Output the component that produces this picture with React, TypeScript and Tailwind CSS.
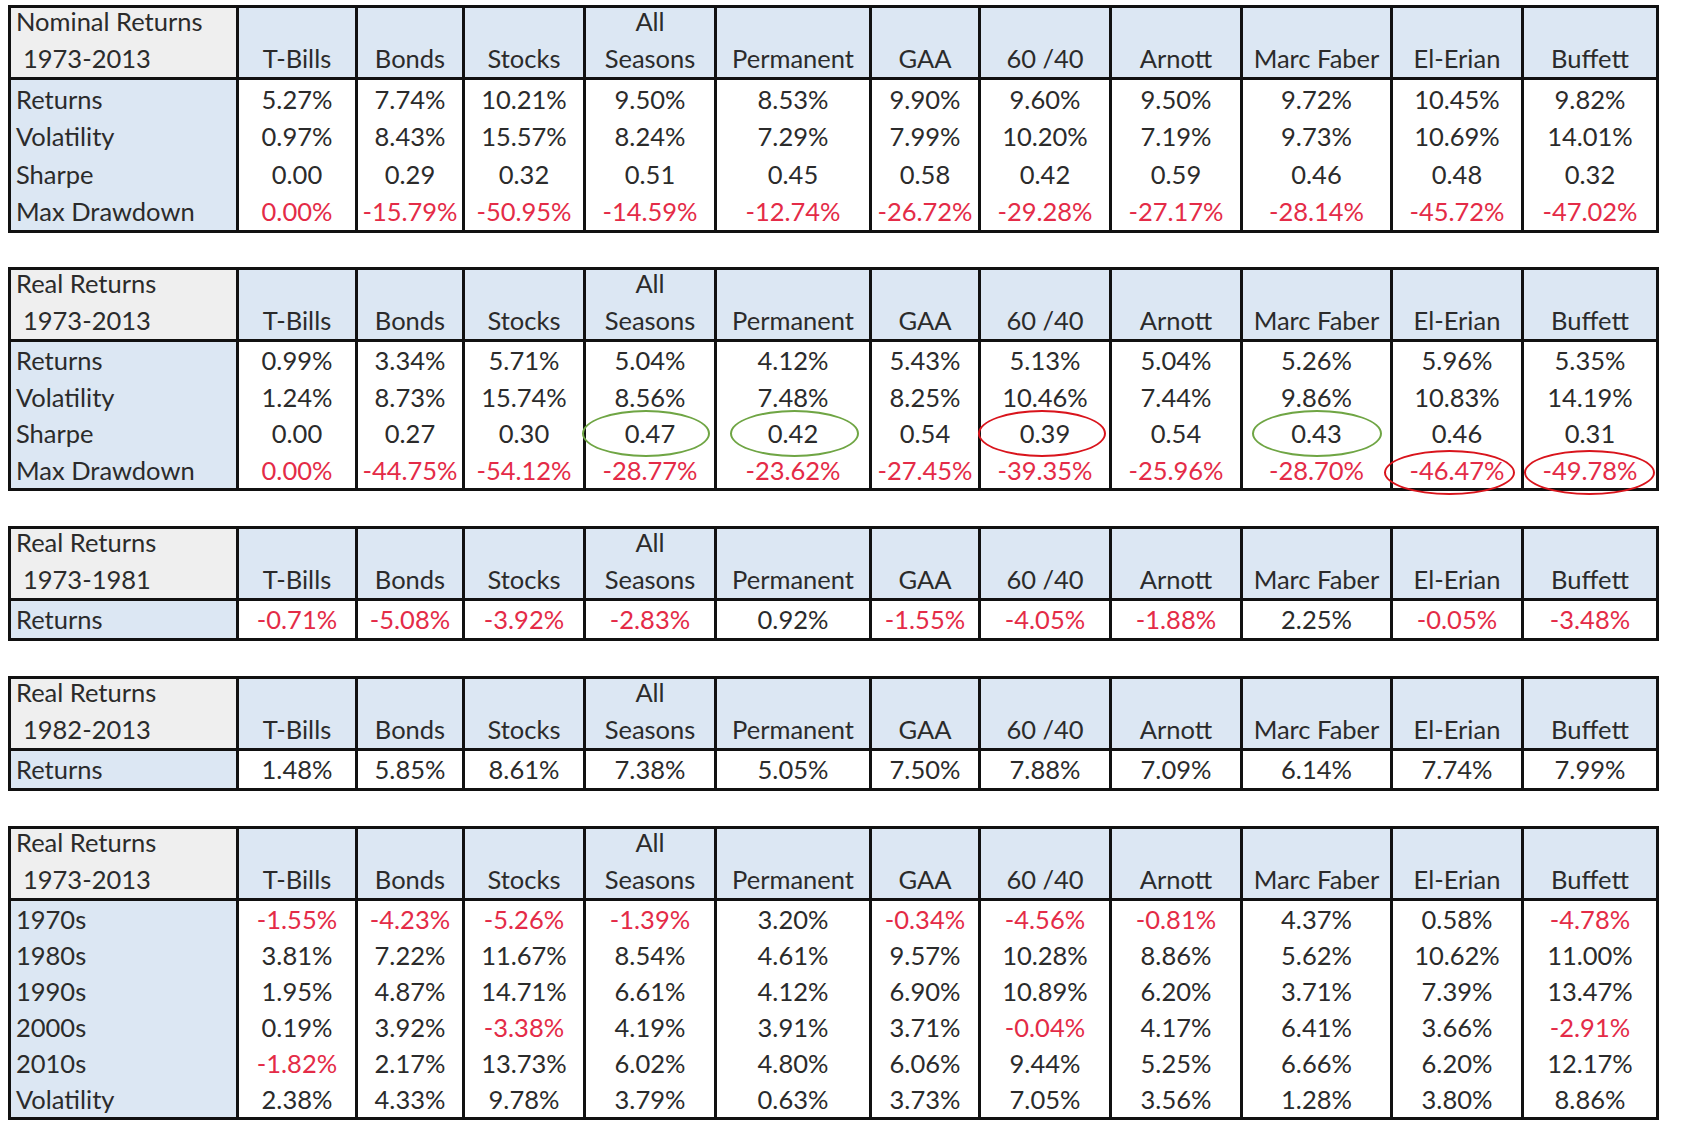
type Mark = { col: number; row: number; color: 'green' | 'red'; left: number; top: number; w: number; h: number }

type Block = {
  title: string
  years: string
  rowH: string
  gap: string
  rows: { label: string; values: string[]; allRed?: boolean }[]
  marks?: Mark[]
}

const headers = ['T-Bills', 'Bonds', 'Stocks', 'All|Seasons', 'Permanent', 'GAA', '60 /40', 'Arnott', 'Marc Faber', 'El-Erian', 'Buffett']

const blocks: Block[] = [
  {
    title: 'Nominal Returns',
    years: '1973-2013',
    rowH: 'h-[37.5px]',
    gap: 'mt-0',
    rows: [
      { label: 'Returns', values: ['5.27%', '7.74%', '10.21%', '9.50%', '8.53%', '9.90%', '9.60%', '9.50%', '9.72%', '10.45%', '9.82%'] },
      { label: 'Volatility', values: ['0.97%', '8.43%', '15.57%', '8.24%', '7.29%', '7.99%', '10.20%', '7.19%', '9.73%', '10.69%', '14.01%'] },
      { label: 'Sharpe', values: ['0.00', '0.29', '0.32', '0.51', '0.45', '0.58', '0.42', '0.59', '0.46', '0.48', '0.32'] },
      { label: 'Max Drawdown', allRed: true, values: ['0.00%', '-15.79%', '-50.95%', '-14.59%', '-12.74%', '-26.72%', '-29.28%', '-27.17%', '-28.14%', '-45.72%', '-47.02%'] },
    ],
  },
  {
    title: 'Real Returns',
    years: '1973-2013',
    rowH: 'h-[36.5px]',
    gap: 'mt-[34px]',
    rows: [
      { label: 'Returns', values: ['0.99%', '3.34%', '5.71%', '5.04%', '4.12%', '5.43%', '5.13%', '5.04%', '5.26%', '5.96%', '5.35%'] },
      { label: 'Volatility', values: ['1.24%', '8.73%', '15.74%', '8.56%', '7.48%', '8.25%', '10.46%', '7.44%', '9.86%', '10.83%', '14.19%'] },
      { label: 'Sharpe', values: ['0.00', '0.27', '0.30', '0.47', '0.42', '0.54', '0.39', '0.54', '0.43', '0.46', '0.31'] },
      { label: 'Max Drawdown', allRed: true, values: ['0.00%', '-44.75%', '-54.12%', '-28.77%', '-23.62%', '-27.45%', '-39.35%', '-25.96%', '-28.70%', '-46.47%', '-49.78%'] },
    ],
    marks: [
      { col: 3, row: 2, color: 'green', left: -4, top: -5, w: 128, h: 47 },
      { col: 4, row: 2, color: 'green', left: 13, top: -5, w: 129, h: 47 },
      { col: 6, row: 2, color: 'red', left: -3, top: -5, w: 128, h: 47 },
      { col: 8, row: 2, color: 'green', left: 9, top: -5, w: 130, h: 47 },
      { col: 9, row: 3, color: 'red', left: -9, top: -2, w: 131, h: 45 },
      { col: 10, row: 3, color: 'red', left: 0, top: -2, w: 131, h: 45 },
    ],
  },
  {
    title: 'Real Returns',
    years: '1973-1981',
    rowH: 'h-[37px]',
    gap: 'mt-[35px]',
    rows: [
      { label: 'Returns', values: ['-0.71%', '-5.08%', '-3.92%', '-2.83%', '0.92%', '-1.55%', '-4.05%', '-1.88%', '2.25%', '-0.05%', '-3.48%'] },
    ],
  },
  {
    title: 'Real Returns',
    years: '1982-2013',
    rowH: 'h-[37px]',
    gap: 'mt-[35px]',
    rows: [
      { label: 'Returns', values: ['1.48%', '5.85%', '8.61%', '7.38%', '5.05%', '7.50%', '7.88%', '7.09%', '6.14%', '7.74%', '7.99%'] },
    ],
  },
  {
    title: 'Real Returns',
    years: '1973-2013',
    rowH: 'h-[36px]',
    gap: 'mt-[35px]',
    rows: [
      { label: '1970s', values: ['-1.55%', '-4.23%', '-5.26%', '-1.39%', '3.20%', '-0.34%', '-4.56%', '-0.81%', '4.37%', '0.58%', '-4.78%'] },
      { label: '1980s', values: ['3.81%', '7.22%', '11.67%', '8.54%', '4.61%', '9.57%', '10.28%', '8.86%', '5.62%', '10.62%', '11.00%'] },
      { label: '1990s', values: ['1.95%', '4.87%', '14.71%', '6.61%', '4.12%', '6.90%', '10.89%', '6.20%', '3.71%', '7.39%', '13.47%'] },
      { label: '2000s', values: ['0.19%', '3.92%', '-3.38%', '4.19%', '3.91%', '3.71%', '-0.04%', '4.17%', '6.41%', '3.66%', '-2.91%'] },
      { label: '2010s', values: ['-1.82%', '2.17%', '13.73%', '6.02%', '4.80%', '6.06%', '9.44%', '5.25%', '6.66%', '6.20%', '12.17%'] },
      { label: 'Volatility', values: ['2.38%', '4.33%', '9.78%', '3.79%', '0.63%', '3.73%', '7.05%', '3.56%', '1.28%', '3.80%', '8.86%'] },
    ],
  },
]

function Ring({ m }: { m: Mark }) {
  return (
    <div
      className={`pointer-events-none absolute z-10 rounded-[50%] border-2 ${m.color === 'green' ? 'border-[#6fa544]' : 'border-[#d9141c]'}`}
      style={{ left: m.left, top: m.top, width: m.w, height: m.h }}
    />
  )
}

function Table({ b }: { b: Block }) {
  return (
    <div className={`w-fit border-[3px] border-[#111] ${b.gap}`}>
      <div className="grid grid-cols-[228px_119px_107px_121px_131px_155px_109px_131px_131px_150px_131px_132px]">
        <div className="flex h-[72px] flex-col justify-end border-r-[3px] border-b-[3px] border-[#111] bg-[#efefef] pl-[5px] leading-[37px]">
          <span>{b.title}</span>
          <span className="pl-[7px]">{b.years}</span>
        </div>
        {headers.map((h, i) => (
          <div
            key={h}
            className={`flex h-[72px] flex-col items-center justify-end border-b-[3px] border-[#111] bg-[#dce7f3] leading-[37px] ${i < headers.length - 1 ? 'border-r-[3px]' : ''}`}
          >
            {h.split('|').map((t) => (
              <span key={t}>{t}</span>
            ))}
          </div>
        ))}
        {b.rows.map((r, ri) => (
          <>
            <div key={r.label + ri} className={`flex ${b.rowH} items-center border-r-[3px] border-[#111] bg-[#dce7f3] pl-[5px]`}>
              {r.label}
            </div>
            {r.values.map((v, ci) => {
              const mark = b.marks?.find((m) => m.row === ri && m.col === ci)
              return (
                <div
                  key={ri + '-' + ci}
                  className={`relative flex ${b.rowH} items-center justify-center bg-white ${ci < r.values.length - 1 ? 'border-r-[3px] border-[#111]' : ''} ${r.allRed || v.startsWith('-') ? 'text-[#e42b47]' : ''}`}
                >
                  {v}
                  {mark && <Ring m={mark} />}
                </div>
              )
            })}
          </>
        ))}
      </div>
    </div>
  )
}

export default function App() {
  return (
    <div className="min-h-[1125px] w-[1682px] bg-white pt-[5px] pl-[8px] font-['Lato','Open_Sans',sans-serif] text-[25.5px] text-[#2b2b2b]">
      <div className="flex flex-col">
        {blocks.map((b, i) => (
          <Table key={i} b={b} />
        ))}
      </div>
    </div>
  )
}
